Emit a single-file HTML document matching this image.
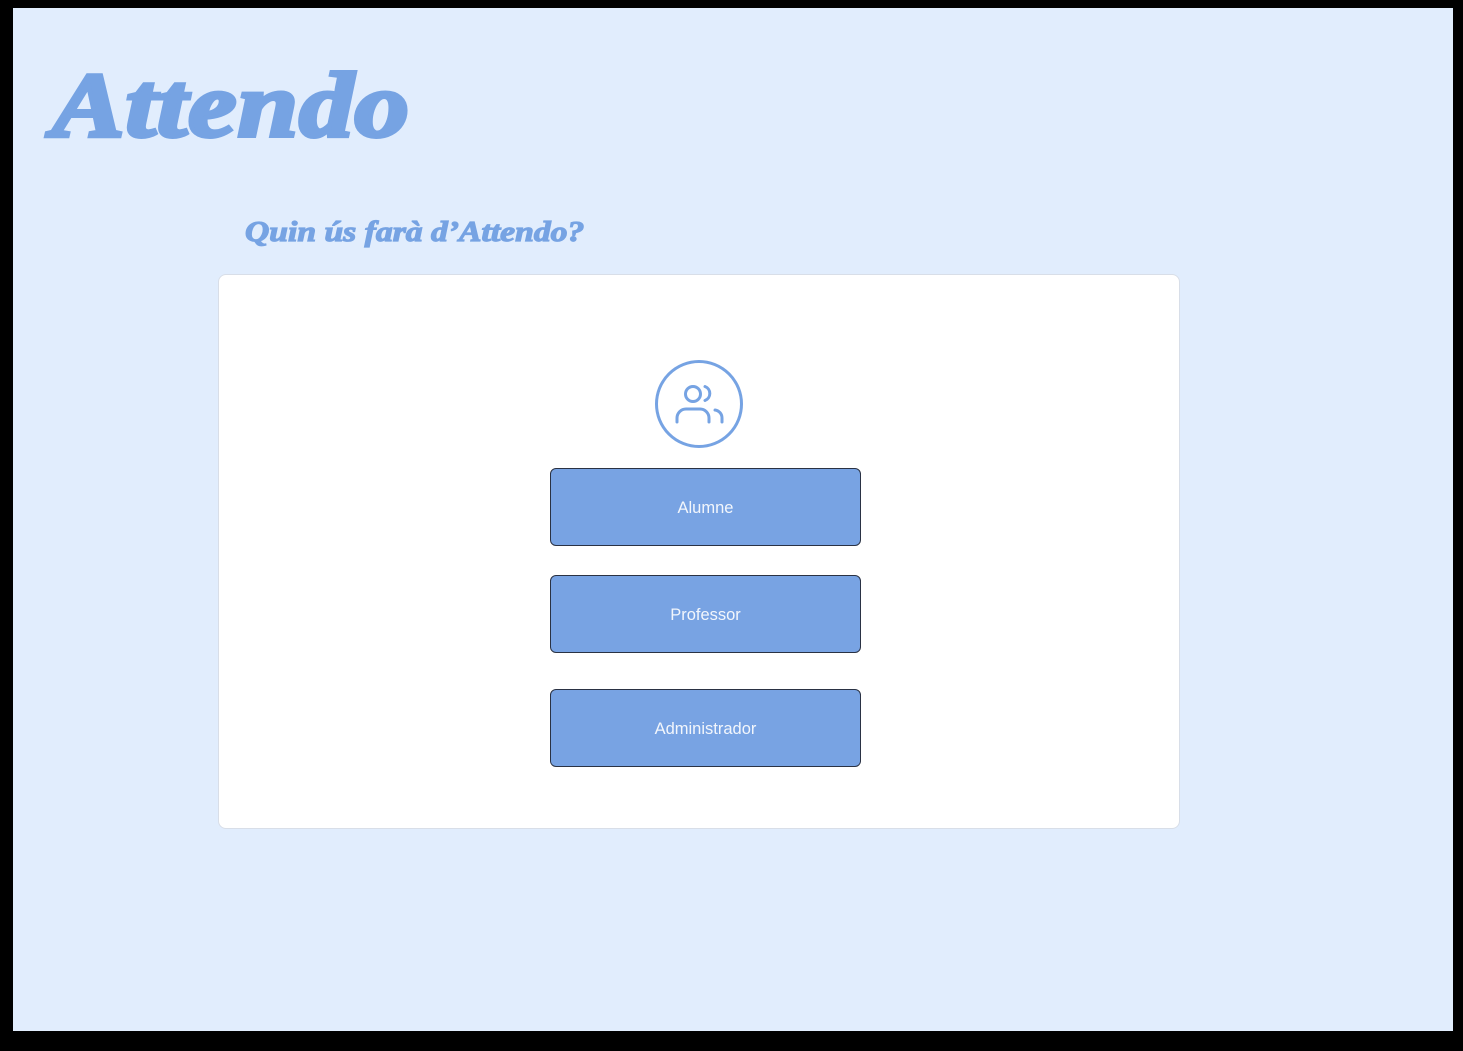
<!DOCTYPE html>
<html><head><meta charset="utf-8"><style>
html,body{margin:0;padding:0;background:#000;width:1463px;height:1051px;overflow:hidden}
.page{position:absolute;left:13px;top:8px;width:1440px;height:1023px;background:#e1edfd}
.title{position:absolute;left:52px;top:50px;font-family:"Liberation Serif",serif;font-weight:bold;font-style:italic;font-size:92px;color:#76a3e3;-webkit-text-stroke:4px #76a3e3;letter-spacing:1px;transform:scaleX(1.18);transform-origin:left top;line-height:110px;margin:0;white-space:nowrap}
.sub{position:absolute;left:245px;top:212px;font-family:"Liberation Serif",serif;font-weight:bold;font-style:italic;font-size:29px;color:#76a3e3;-webkit-text-stroke:1.2px #76a3e3;line-height:40px;white-space:nowrap;transform:scaleX(1.16);transform-origin:left top}
.card{position:absolute;left:218px;top:274px;width:962px;height:555px;background:#fff;border:1px solid #d8dee8;border-radius:8px;box-sizing:border-box}
.btn{position:absolute;left:550px;width:311px;height:78px;background:#78a3e3;border:1px solid #2a3244;border-radius:6px;box-sizing:border-box;color:#f2f6fc;font-family:"Liberation Sans",sans-serif;font-size:16.5px;display:flex;align-items:center;justify-content:center;padding-top:3px}
</style></head><body>
<div class="page"></div>
<div class="title">Attendo</div>
<div class="sub">Quin ús farà d’Attendo?</div>
<div class="card"></div>
<svg style="position:absolute;left:654px;top:360px" width="90" height="90" viewBox="0 0 90 90" fill="none" stroke="#76a3e3" stroke-width="3" stroke-linecap="round">
<circle cx="45" cy="44" r="42.5"/>
<circle cx="39" cy="34" r="7.5"/>
<path d="M23 62v-4a9 9 0 0 1 9-9h14a9 9 0 0 1 9 9v4"/>
<path d="M51 26.5a7.5 7.5 0 0 1 0 14"/>
<path d="M61 50a8 8 0 0 1 7 8v4"/>
</svg>
<div class="btn" style="top:468px">Alumne</div>
<div class="btn" style="top:575px">Professor</div>
<div class="btn" style="top:689px">Administrador</div>
</body></html>
